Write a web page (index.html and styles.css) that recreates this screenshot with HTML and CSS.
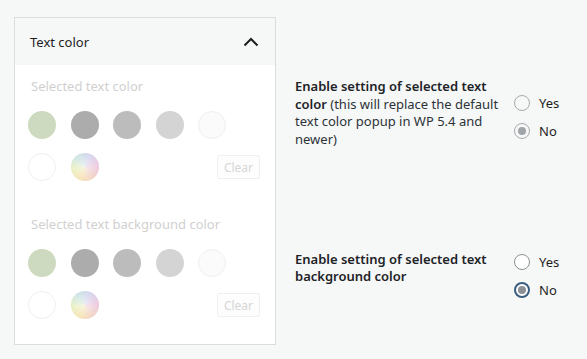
FILE: index.html
```html
<!DOCTYPE html>
<html lang="en">
<head>
  <meta charset="UTF-8">
  <title>Text color settings</title>
  <link rel="stylesheet" href="styles.css">
</head>
<body>
  <div class="pagina">
    <div class="panel">
      <div class="panel-cabecera">
        <span>Text color</span>
        <svg class="chevron" width="16" height="10" viewBox="0 0 16 10">
          <path d="M1.5 8.5 L8 2 L14.5 8.5" fill="none" stroke="#1e1e1e" stroke-width="2"/>
        </svg>
      </div>
      <div class="panel-cuerpo">
        <div class="grupo">
          <div class="grupo-titulo">Selected text color</div>
          <div class="paleta">
            <span class="muestra verde"></span>
            <span class="muestra gris1"></span>
            <span class="muestra gris2"></span>
            <span class="muestra gris3"></span>
            <span class="muestra casi-blanco"></span>
          </div>
          <div class="paleta">
            <span class="muestra blanco"></span>
            <span class="muestra arcoiris"></span>
            <button class="limpiar">Clear</button>
          </div>
        </div>
        <div class="grupo">
          <div class="grupo-titulo">Selected text background color</div>
          <div class="paleta">
            <span class="muestra verde"></span>
            <span class="muestra gris1"></span>
            <span class="muestra gris2"></span>
            <span class="muestra gris3"></span>
            <span class="muestra casi-blanco"></span>
          </div>
          <div class="paleta">
            <span class="muestra blanco"></span>
            <span class="muestra arcoiris"></span>
            <button class="limpiar">Clear</button>
          </div>
        </div>
      </div>
    </div>

    <div class="ajustes">
      <div class="ajuste">
        <div class="ajuste-texto">
          <strong>Enable setting of selected text color</strong> (this will replace the default text color popup in WP 5.4 and newer)
        </div>
        <div class="opciones">
          <label class="opcion"><input type="radio" name="color" disabled> Yes</label>
          <label class="opcion"><input type="radio" name="color" checked disabled> No</label>
        </div>
      </div>
      <div class="ajuste segundo">
        <div class="ajuste-texto">
          <strong>Enable setting of selected text background color</strong>
        </div>
        <div class="opciones">
          <label class="opcion"><input type="radio" name="fondo"> Yes</label>
          <label class="opcion"><input type="radio" name="fondo" checked class="foco"> No</label>
        </div>
      </div>
    </div>
  </div>
</body>
</html>
```

FILE: styles.css
```css
:root {
  --fondo: #f6f7f7;
  --borde: #dcdcde;
  --texto: #1e1e1e;
  --texto-ajuste: #2c3338;
  --apagado: #cfcfcf;
}

* {
  box-sizing: border-box;
}

body {
  margin: 0;
  background: var(--fondo);
  color: var(--texto);
  font-family: "Noto Sans", "Open Sans", sans-serif;
  font-size: 13px;
}

.pagina {
  display: flex;
  align-items: flex-start;
  padding: 17px 0 0 14px;
}

/* Panel de colores */
.panel {
  width: 262px;
  border: 1px solid var(--borde);
  background: #fff;
}

.panel-cabecera {
  height: 47px;
  background: var(--fondo);
  display: flex;
  align-items: center;
  justify-content: space-between;
  padding: 0 16px 0 15px;
  font-size: 13px;
}

.chevron {
  display: block;
  margin-top: 1px;
}

.panel-cuerpo {
  padding: 12px 15px 25px 13px;
}

.grupo + .grupo {
  margin-top: 34px;
}

.grupo-titulo {
  color: #d0d0d0;
  font-size: 13px;
  line-height: 18px;
  padding-left: 3px;
  margin-bottom: 16px;
}

.paleta {
  display: flex;
  align-items: center;
  gap: 14.5px;
}

.paleta + .paleta {
  margin-top: 14px;
}

.muestra {
  width: 28px;
  height: 28px;
  border-radius: 50%;
  display: block;
  flex: none;
}

.verde { background: #cddabf; }
.gris1 { background: #acacac; }
.gris2 { background: #bcbcbc; }
.gris3 { background: #d4d4d4; }
.casi-blanco { background: #fbfbfb; border: 1px solid #efefef; }
.blanco { background: #fff; border: 1px solid #efefef; }

.arcoiris {
  background:
    radial-gradient(circle at 50% 50%, rgba(255,255,255,0.55), rgba(255,255,255,0) 70%),
    conic-gradient(from 200deg, #f6e3b5, #eaf0c2, #cfe6e2, #d3d6ee, #ecc8df, #f1d2c8, #f6e3b5);
}

.limpiar {
  margin-left: auto;
  width: 43px;
  height: 24px;
  padding: 0;
  background: #fdfdfd;
  border: 1px solid #efefef;
  border-radius: 2px;
  color: #d6d6d6;
  font-family: inherit;
  font-size: 12px;
}

/* Ajustes de la derecha */
.ajustes {
  margin-left: 19px;
  padding-top: 61px;
}

.ajuste {
  display: flex;
  align-items: center;
}

.ajuste.segundo {
  margin-top: 88px;
}

.ajuste-texto {
  width: 205px;
  color: var(--texto-ajuste);
  font-size: 13px;
  line-height: 17.5px;
}

.ajuste-texto strong {
  font-weight: 600;
  color: #1d2327;
}

.opciones {
  margin-left: 14px;
  padding-top: 8px;
  display: flex;
  flex-direction: column;
  gap: 8px;
}

.segundo .opciones {
  padding-top: 16px;
}

.opcion {
  display: flex;
  align-items: center;
  gap: 9px;
  font-size: 13px;
  line-height: 20px;
  color: var(--texto);
}

.opcion input {
  appearance: none;
  -webkit-appearance: none;
  margin: 0;
  width: 16px;
  height: 16px;
  border: 1px solid #8c8f94;
  border-radius: 50%;
  background: #fff;
  display: grid;
  place-items: center;
}

.opcion input:checked::before {
  content: "";
  width: 8px;
  height: 8px;
  border-radius: 50%;
  background: #8c8f94;
}

.opcion input:disabled {
  border-color: #a7aaad;
  background: #f6f7f7;
}

.opcion input:disabled:checked::before {
  background: #a0a5aa;
}

.opcion input.foco {
  border: 2px solid #3a5f80;
}
```
